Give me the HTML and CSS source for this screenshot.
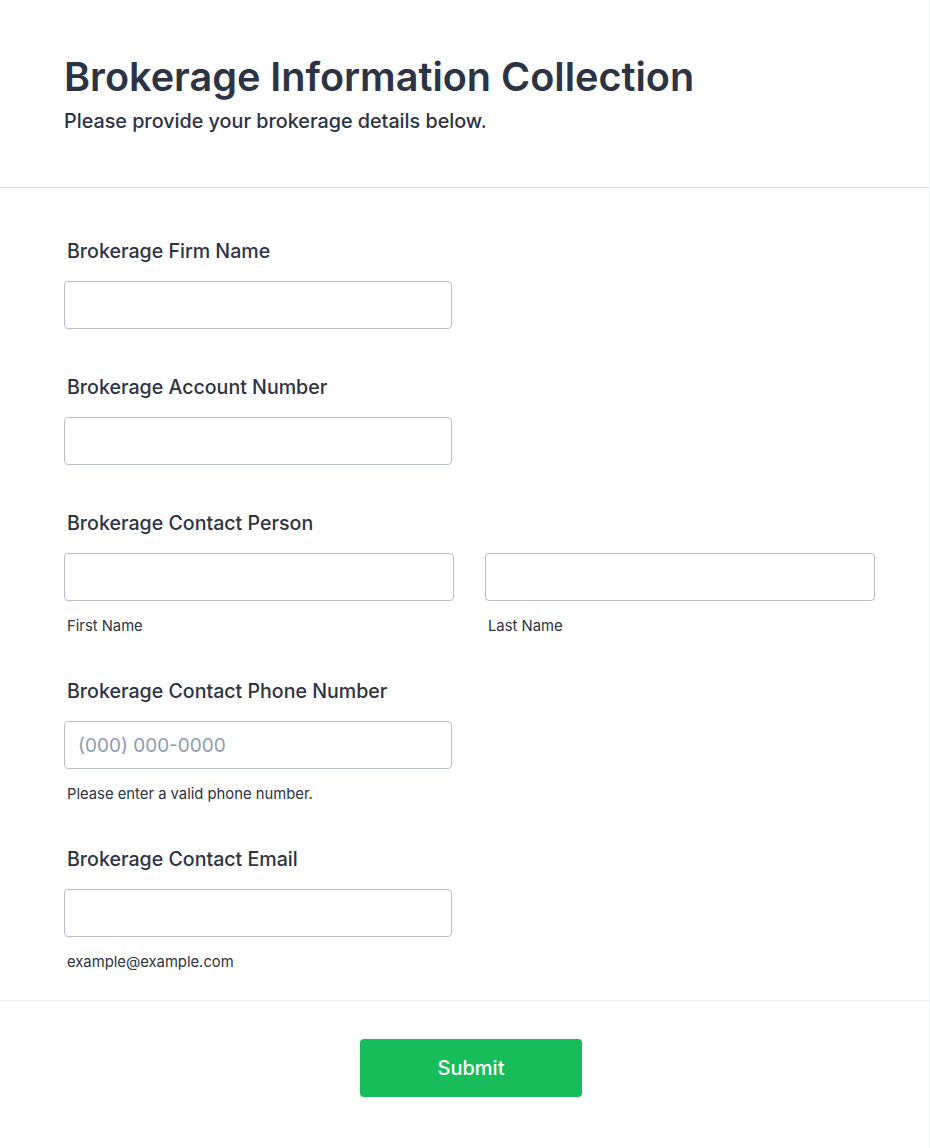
FILE: index.html
```html
<!DOCTYPE html>
<html lang="en">
<head>
<meta charset="utf-8">
<title>Brokerage Information Collection</title>
<link rel="stylesheet" href="styles.css">
</head>
<body>
<form class="form-card">
  <header class="form-header">
    <h1 class="form-title">Brokerage Information Collection</h1>
    <p class="form-subtitle">Please provide your brokerage details below.</p>
  </header>

  <section class="form-body">
    <div class="field field-plain">
      <label class="field-label" for="firm">Brokerage Firm Name</label>
      <input class="text-input" id="firm" type="text">
    </div>

    <div class="field field-plain">
      <label class="field-label" for="account">Brokerage Account Number</label>
      <input class="text-input" id="account" type="text">
    </div>

    <div class="field">
      <label class="field-label" for="first">Brokerage Contact Person</label>
      <div class="name-row">
        <div class="name-col">
          <input class="text-input wide" id="first" type="text">
          <span class="sublabel">First Name</span>
        </div>
        <div class="name-col">
          <input class="text-input wide" id="last" type="text">
          <span class="sublabel">Last Name</span>
        </div>
      </div>
    </div>

    <div class="field">
      <label class="field-label" for="phone">Brokerage Contact Phone Number</label>
      <input class="text-input" id="phone" type="tel" placeholder="(000) 000-0000">
      <span class="sublabel">Please enter a valid phone number.</span>
    </div>

    <div class="field">
      <label class="field-label" for="email">Brokerage Contact Email</label>
      <input class="text-input" id="email" type="email">
      <span class="sublabel">example@example.com</span>
    </div>
  </section>

  <footer class="form-footer">
    <button class="submit-btn" type="button">Submit</button>
  </footer>
</form>
</body>
</html>
```

FILE: styles.css
```css
* {
  box-sizing: border-box;
}

html, body {
  margin: 0;
  padding: 0;
  background: #ffffff;
}

body {
  font-family: Inter, "Noto Sans", "Liberation Sans", sans-serif;
  color: #2c3345;
}

.form-card {
  width: 930px;
  min-height: 1148px;
  border-right: 1px solid #eef0f5;
  background: #ffffff;
}

.form-header {
  padding: 53px 64px 52px;
  border-bottom: 1px solid #dcdde9;
}

.form-title {
  margin: 0;
  font-size: 39.6px;
  line-height: 48px;
  font-weight: 600;
  color: #2c3345;
}

.form-subtitle {
  margin: 7px 0 0;
  font-size: 19.75px;
  line-height: 27px;
  font-weight: 500;
  color: #2c3345;
}

.form-body {
  padding: 50px 64px 29px;
  display: flex;
  flex-direction: column;
  gap: 43px;
  border-bottom: 1px solid #ecedf3;
}

.field {
  display: flex;
  flex-direction: column;
  align-items: flex-start;
}

.field-plain {
  margin-bottom: 2px;
}

.field-label {
  padding-left: 3px;
  font-size: 19.6px;
  line-height: 27px;
  font-weight: 500;
  color: #2c3345;
  margin-bottom: 16px;
}

.text-input {
  width: 388px;
  height: 48px;
  border: 1px solid #b8bdc9;
  border-radius: 4px;
  padding: 0 13px;
  font-family: inherit;
  font-size: 19px;
  color: #2c3345;
  background: #ffffff;
  outline: none;
}

.text-input.wide {
  width: 390px;
}

.text-input::placeholder {
  color: #8f9bb0;
}

.name-row {
  display: flex;
  gap: 31px;
}

.name-col {
  display: flex;
  flex-direction: column;
}

.sublabel {
  margin-top: 16px;
  padding-left: 3px;
  font-size: 14.8px;
  line-height: 18px;
  color: #2c3345;
}

.form-footer {
  display: flex;
  justify-content: center;
  padding: 38px 0 40px;
}

.submit-btn {
  width: 222px;
  height: 58px;
  margin-left: 13px;
  border: none;
  border-radius: 4px;
  background: #18bd5b;
  color: #ffffff;
  font-family: inherit;
  font-size: 20px;
  font-weight: 500;
  cursor: pointer;
}
```
